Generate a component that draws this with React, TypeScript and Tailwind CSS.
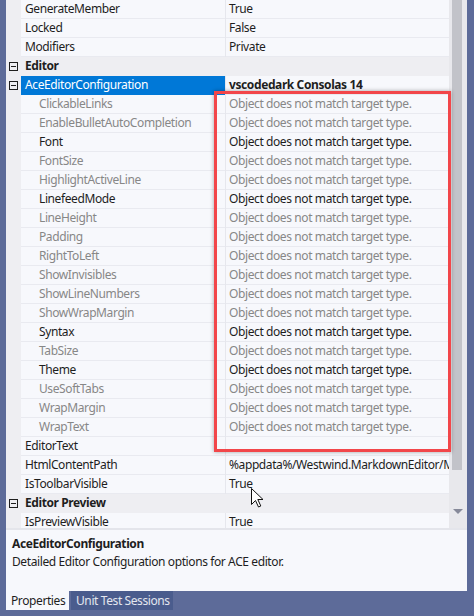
import React from "react";

type Row =
  | { kind: "cat"; name: string }
  | {
      kind: "prop";
      name: string;
      value: string;
      indent?: boolean;
      dim?: boolean;
      selected?: boolean;
      boldValue?: boolean;
      expand?: boolean;
    };

const MSG = "Object does not match target type.";

const rows: Row[] = [
  { kind: "prop", name: "GenerateMember", value: "True" },
  { kind: "prop", name: "Locked", value: "False" },
  { kind: "prop", name: "Modifiers", value: "Private" },
  { kind: "cat", name: "Editor" },
  {
    kind: "prop",
    name: "AceEditorConfiguration",
    value: "vscodedark Consolas 14",
    selected: true,
    boldValue: true,
    expand: true,
  },
  { kind: "prop", name: "ClickableLinks", value: MSG, indent: true, dim: true },
  { kind: "prop", name: "EnableBulletAutoCompletion", value: MSG, indent: true, dim: true },
  { kind: "prop", name: "Font", value: MSG, indent: true },
  { kind: "prop", name: "FontSize", value: MSG, indent: true, dim: true },
  { kind: "prop", name: "HighlightActiveLine", value: MSG, indent: true, dim: true },
  { kind: "prop", name: "LinefeedMode", value: MSG, indent: true },
  { kind: "prop", name: "LineHeight", value: MSG, indent: true, dim: true },
  { kind: "prop", name: "Padding", value: MSG, indent: true, dim: true },
  { kind: "prop", name: "RightToLeft", value: MSG, indent: true, dim: true },
  { kind: "prop", name: "ShowInvisibles", value: MSG, indent: true, dim: true },
  { kind: "prop", name: "ShowLineNumbers", value: MSG, indent: true, dim: true },
  { kind: "prop", name: "ShowWrapMargin", value: MSG, indent: true, dim: true },
  { kind: "prop", name: "Syntax", value: MSG, indent: true },
  { kind: "prop", name: "TabSize", value: MSG, indent: true, dim: true },
  { kind: "prop", name: "Theme", value: MSG, indent: true },
  { kind: "prop", name: "UseSoftTabs", value: MSG, indent: true, dim: true },
  { kind: "prop", name: "WrapMargin", value: MSG, indent: true, dim: true },
  { kind: "prop", name: "WrapText", value: MSG, indent: true, dim: true },
  { kind: "prop", name: "EditorText", value: "" },
  {
    kind: "prop",
    name: "HtmlContentPath",
    value: "%appdata%/Westwind.MarkdownEditor/MarkdownMonster",
  },
  { kind: "prop", name: "IsToolbarVisible", value: "True" },
  { kind: "cat", name: "Editor Preview" },
  { kind: "prop", name: "IsPreviewVisible", value: "True" },
];

function MinusBox() {
  return (
    <div className="ml-[3px] w-[9px] h-[9px] border border-[#1e1e1e] flex items-center justify-center">
      <div className="w-[5px] h-px bg-[#1e1e1e]" />
    </div>
  );
}

function GridRow({ row }: { row: Row }) {
  if (row.kind === "cat") {
    return (
      <div className="flex h-[19px] bg-[#eeeef2]">
        <div className="w-[15px] flex items-center">
          <MinusBox />
        </div>
        <div className="pl-[4px] flex items-center font-bold text-[#1e1e1e] leading-[18px] h-[18px]">
          {row.name}
        </div>
      </div>
    );
  }
  const nameColor = row.selected
    ? "text-white"
    : row.dim
    ? "text-[#878787]"
    : "text-[#1e1e1e]";
  const valColor = row.dim ? "text-[#878787]" : "text-[#1e1e1e]";
  return (
    <div className="flex h-[19px]">
      <div className="w-[15px] bg-[#eeeef2] flex items-center">
        {row.expand ? <MinusBox /> : null}
      </div>
      <div
        className={
          "w-[204px] h-[19px] border-b whitespace-nowrap overflow-hidden leading-[18px] " +
          (row.selected
            ? "bg-[#0078d7] border-[#0078d7] "
            : "border-[#e9eaf0] ") +
          (row.indent ? "pl-[18px] " : "pl-[4px] ") +
          nameColor
        }
      >
        {row.name}
      </div>
      <div className="w-px h-[19px] bg-[#e6e7ed]" />
      <div
        className={
          "flex-1 h-[19px] border-b border-[#e9eaf0] pl-[3px] whitespace-nowrap overflow-hidden leading-[18px] " +
          valColor +
          (row.boldValue ? " font-bold" : "")
        }
      >
        {row.value}
      </div>
    </div>
  );
}

export default function App() {
  return (
    <div
      className="relative w-[474px] h-[616px] overflow-hidden bg-[#5d6b99] text-[12px]"
      style={{ fontFamily: '"Noto Sans", "Open Sans", Arial, sans-serif' }}
    >
      <div className="ml-[6px] w-[461px] flex flex-col">
        <div className="flex h-[528px]">
          <div className="w-[443px] h-[528px] overflow-hidden bg-[#f7f8fc]">
            <div className="tracking-[-0.4px]">
              {rows.map((r, i) => (
                <GridRow key={i} row={r} />
              ))}
            </div>
          </div>
          <div className="w-[18px] h-[528px] bg-[#e8e8ec] flex flex-col">
            <div className="ml-[3px] w-[10px] h-[470px] bg-[#c2c3c9]" />
            <div className="flex-1" />
            <div className="h-[20px] flex justify-center items-start pt-[1px]">
              <svg width="10" height="6" viewBox="0 0 10 6">
                <path d="M0 0 L10 0 L5 5 Z" fill="#868999" />
              </svg>
            </div>
          </div>
        </div>
        <div className="h-[2px] bg-[#e4e5eb]" />
        <div className="h-[61px] bg-[#f7f8fc] pl-[6px] pt-[5px] text-[#1e1e1e] leading-[18px] tracking-[-0.4px]">
          <div className="font-bold">AceEditorConfiguration</div>
          <div>Detailed Editor Configuration options for ACE editor.</div>
        </div>
        <div className="flex h-[19px] leading-[19px] tracking-[-0.4px]">
          <div className="w-[63px] bg-[#f7f8fc] pl-[5px] text-[#1e1e1e]">
            Properties
          </div>
          <div className="ml-[2px] w-[102px] bg-[#4a5c8d] pl-[5px] text-[#e3e6ef]">
            Unit Test Sessions
          </div>
        </div>
      </div>

      {/* red highlight box */}
      <div className="absolute left-[214px] top-[91px] w-[237px] h-[361px] border-[3px] border-[#f2464a] shadow-[0_0_4px_rgba(0,0,0,0.35)]" />

      {/* mouse cursor */}
      <svg
        className="absolute left-[251px] top-[488px]"
        width="13"
        height="20"
        viewBox="0 0 13 20"
      >
        <path
          d="M0.5 0.5 L0.5 16.5 L4.5 12.5 L7.5 19 L9.8 18 L6.8 11.5 L12 11.5 Z"
          fill="white"
          stroke="#111"
          strokeWidth="1"
          strokeLinejoin="miter"
        />
      </svg>
    </div>
  );
}
